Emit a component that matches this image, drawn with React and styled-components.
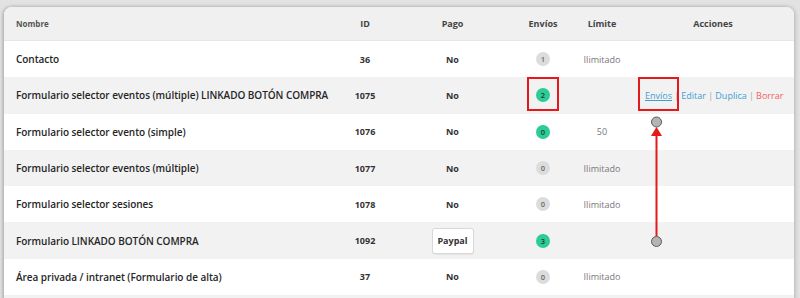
import React from "react";
import styled, { createGlobalStyle } from "styled-components";

const GlobalStyle = createGlobalStyle`
  html, body { margin: 0; padding: 0; }
  body {
    background: #e2e2e2;
    font-family: "Open Sans", "Noto Sans", sans-serif;
    overflow: hidden;
  }
`;

const Page = styled.div`
  padding: 7px 6px 0 4px;
  height: 298px;
  box-sizing: border-box;
`;

const Card = styled.div`
  position: relative;
  width: 790px;
  background: #fff;
  border-radius: 8px 8px 0 0;
  box-shadow: 1px 0 4px rgba(0, 0, 0, 0.2), -2px 0 3px rgba(0, 0, 0, 0.14);
  overflow: hidden;
`;

const COLS = "326px 70px 105px 76px 42px 171px";

const HeaderRow = styled.div`
  display: grid;
  grid-template-columns: ${COLS};
  height: 33px;
  background: #f0f0f0;
  border-bottom: 1px solid #e6e6e6;
  align-items: center;
`;

const HeadCell = styled.div`
  font-size: ${(p) => (p.$small ? "8px" : "9px")};
  font-weight: 700;
  color: ${(p) => (p.$small ? "#555" : "#444")};
  text-align: ${(p) => (p.$left ? "left" : "center")};
  padding-left: ${(p) => p.$pl || 0}px;
`;

const Row = styled.div`
  display: grid;
  grid-template-columns: ${COLS};
  height: 36.3px;
  align-items: center;
  background: ${(p) => (p.$alt ? "#f2f2f2" : "#ffffff")};
`;

const NameCell = styled.div`
  padding-left: 12px;
  font-size: 10px;
  font-weight: 600;
  letter-spacing: -0.05px;
  color: #262626;
  white-space: nowrap;
`;

const Cell = styled.div`
  display: flex;
  align-items: center;
  justify-content: center;
  font-size: 9px;
  font-weight: ${(p) => (p.$bold ? 700 : 400)};
  color: ${(p) => (p.$muted ? "#777" : "#333")};
`;

const ActionsCell = styled.div`
  display: flex;
  align-items: center;
  padding-left: 22px;
  font-size: 9px;
  white-space: nowrap;
`;

const Badge = styled.span`
  display: inline-flex;
  align-items: center;
  justify-content: center;
  width: 14px;
  height: 14px;
  border-radius: 50%;
  font-size: 7.5px;
  font-weight: 600;
  background: ${(p) => (p.$green ? "#2dcb96" : "#dcdcdc")};
  color: ${(p) => (p.$green ? "#1d3b33" : "#6a6a6a")};
`;

const PayButton = styled.span`
  display: inline-flex;
  align-items: center;
  justify-content: center;
  width: 42px;
  height: 26px;
  box-sizing: border-box;
  border: 1px solid #d8d8d8;
  border-radius: 3px;
  background: #fff;
  box-shadow: 0 1px 1px rgba(0, 0, 0, 0.06);
  font-size: 9px;
  font-weight: 700;
  color: #333;
`;

const Link = styled.a`
  color: ${(p) => (p.$danger ? "#f4605e" : "#3f9fd4")};
  text-decoration: ${(p) => (p.$under ? "underline" : "none")};
  cursor: pointer;
`;

const Sep = styled.span`
  color: #9aa;
  margin: 0 2.2px;
`;

const HighlightBox = styled.div`
  position: absolute;
  left: ${(p) => p.$x}px;
  top: ${(p) => p.$y}px;
  width: ${(p) => p.$w}px;
  height: ${(p) => p.$h}px;
  box-sizing: border-box;
  border: 2px solid #e3191c;
  pointer-events: none;
`;

const ArrowSvg = styled.svg`
  position: absolute;
  left: 636px;
  top: 103px;
  pointer-events: none;
`;

const rows = [
  { name: "Contacto", id: "36", pay: "No", sends: 1, green: false, limit: "Ilimitado" },
  { name: "Formulario selector eventos (múltiple) LINKADO BOTÓN COMPRA", id: "1075", pay: "No", sends: 2, green: true, limit: "", actions: true },
  { name: "Formulario selector evento (simple)", id: "1076", pay: "No", sends: 0, green: true, limit: "50" },
  { name: "Formulario selector eventos (múltiple)", id: "1077", pay: "No", sends: 0, green: false, limit: "Ilimitado" },
  { name: "Formulario selector sesiones", id: "1078", pay: "No", sends: 0, green: false, limit: "Ilimitado" },
  { name: "Formulario LINKADO BOTÓN COMPRA", id: "1092", pay: "Paypal", sends: 3, green: true, limit: "" },
  { name: "Área privada / intranet (Formulario de alta)", id: "37", pay: "No", sends: 0, green: false, limit: "Ilimitado" },
];

export default function App() {
  return (
    <>
      <GlobalStyle />
      <Page>
        <Card>
          <HeaderRow>
            <HeadCell $left $small $pl={12}>Nombre</HeadCell>
            <HeadCell>ID</HeadCell>
            <HeadCell>Pago</HeadCell>
            <HeadCell>Envíos</HeadCell>
            <HeadCell>Límite</HeadCell>
            <HeadCell $pl={9}>Acciones</HeadCell>
          </HeaderRow>
          {rows.map((r, i) => (
            <Row key={r.id} $alt={i % 2 === 1}>
              <NameCell>{r.name}</NameCell>
              <Cell $bold>{r.id}</Cell>
              <Cell $bold>
                {r.pay === "Paypal" ? <PayButton>Paypal</PayButton> : r.pay}
              </Cell>
              <Cell>
                <Badge $green={r.green}>{r.sends}</Badge>
              </Cell>
              <Cell $muted>{r.limit}</Cell>
              <ActionsCell>
                {r.actions && (
                  <>
                    <Link $under>Envíos</Link>
                    <Sep>|</Sep>
                    <Link>Editar</Link>
                    <Sep>|</Sep>
                    <Link>Duplica</Link>
                    <Sep>|</Sep>
                    <Link $danger>Borrar</Link>
                  </>
                )}
              </ActionsCell>
            </Row>
          ))}
          <Row $alt>
            <NameCell />
          </Row>

          <HighlightBox $x={523} $y={70} $w={32} $h={34} />
          <HighlightBox $x={634} $y={70} $w={41} $h={34} />
          <ArrowSvg width="40" height="145" viewBox="640 110 40 145">
            <line x1="656.5" y1="133" x2="656.5" y2="236" stroke="#e3191c" strokeWidth="2" />
            <polygon points="656.5,127 651,136 662,136" fill="#e3191c" />
            <circle cx="656.5" cy="122" r="5" fill="#b4b4b4" stroke="#5a5a5a" strokeWidth="1" />
            <circle cx="656.5" cy="241.5" r="5" fill="#b4b4b4" stroke="#5a5a5a" strokeWidth="1" />
          </ArrowSvg>
        </Card>
      </Page>
    </>
  );
}
